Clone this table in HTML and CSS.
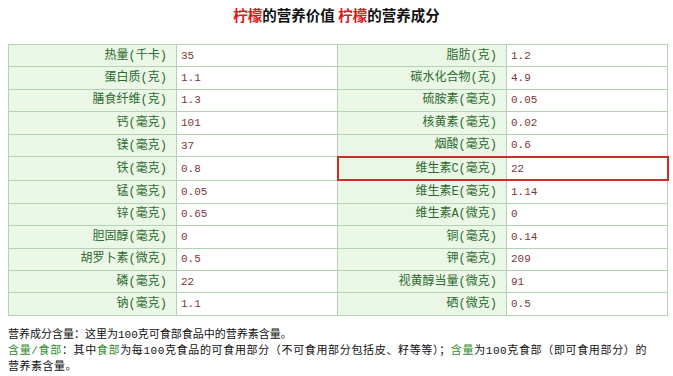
FILE: index.html
```html
<!DOCTYPE html>
<html lang="zh-CN">
<head>
<meta charset="utf-8">
<title>柠檬的营养价值</title>
<link rel="stylesheet" href="styles.css">
</head>
<body>
<div class="page">
  <h1 class="title"><span class="red">柠檬</span>的营养价值 <span class="red">柠檬</span>的营养成分</h1>
  <table class="nut">
    <colgroup>
      <col class="ck1"><col class="cv"><col class="ck2"><col class="cv">
    </colgroup>
    <tbody>
      <tr><td class="k">热量(千卡)</td><td class="v">35</td><td class="k">脂肪(克)</td><td class="v">1.2</td></tr>
      <tr><td class="k">蛋白质(克)</td><td class="v">1.1</td><td class="k">碳水化合物(克)</td><td class="v">4.9</td></tr>
      <tr><td class="k">膳食纤维(克)</td><td class="v">1.3</td><td class="k">硫胺素(毫克)</td><td class="v">0.05</td></tr>
      <tr><td class="k">钙(毫克)</td><td class="v">101</td><td class="k">核黄素(毫克)</td><td class="v">0.02</td></tr>
      <tr><td class="k">镁(毫克)</td><td class="v">37</td><td class="k">烟酸(毫克)</td><td class="v">0.6</td></tr>
      <tr><td class="k">铁(毫克)</td><td class="v">0.8</td><td class="k hl">维生素C(毫克)</td><td class="v hl">22</td></tr>
      <tr><td class="k">锰(毫克)</td><td class="v">0.05</td><td class="k">维生素E(毫克)</td><td class="v">1.14</td></tr>
      <tr><td class="k">锌(毫克)</td><td class="v">0.65</td><td class="k">维生素A(微克)</td><td class="v">0</td></tr>
      <tr><td class="k">胆固醇(毫克)</td><td class="v">0</td><td class="k">铜(毫克)</td><td class="v">0.14</td></tr>
      <tr><td class="k">胡罗卜素(微克)</td><td class="v">0.5</td><td class="k">钾(毫克)</td><td class="v">209</td></tr>
      <tr><td class="k">磷(毫克)</td><td class="v">22</td><td class="k">视黄醇当量(微克)</td><td class="v">91</td></tr>
      <tr><td class="k">钠(毫克)</td><td class="v">1.1</td><td class="k">硒(微克)</td><td class="v">0.5</td></tr>
    </tbody>
  </table>
  <div class="note">
    <p class="line">营养成分含量：这里为100克可食部食品中的营养素含量。</p>
    <p class="para"><span class="g">含量</span><span class="g">/</span><span class="g">食部</span>：其中<span class="g">食部</span>为每100克食品的可食用部分（不可食用部分包括皮、籽等等）；<span class="g">含量</span>为100克食部（即可食用部分）的营养素含量。</p>
  </div>
</div>
</body>
</html>
```

FILE: styles.css
```css
html, body {
  margin: 0;
  padding: 0;
  background: #ffffff;
}
body {
  font-family: "Noto Sans CJK SC", "Liberation Sans", sans-serif;
  color: #000;
}
.page {
  padding: 5px 8px 0 8px;
}
.title {
  margin: 0 0 19px 0;
  font-size: 14.5px;
  line-height: 20px;
  font-weight: bold;
  text-align: center;
  color: #111;
}
.red {
  color: #e0161b;
}
.nut {
  border-collapse: collapse;
  width: 659px;
  table-layout: fixed;
  border: 1px solid #a9cca9;
}
.ck1 { width: 168px; }
.ck2 { width: 169px; }
.cv { width: 161px; }
.nut td {
  border: 1px solid #b2d2b2;
  height: 21.4px;
  padding: 0;
  font-size: 12px;
  line-height: 16px;
  white-space: nowrap;
  overflow: hidden;
}
.nut td.k {
  background: #eaf7e7;
  color: #2c6a2c;
  text-align: right;
  padding-right: 9px;
  font-family: "Liberation Mono", "Noto Sans CJK SC", monospace;
}
.nut td.v {
  background: #ffffff;
  color: #7a3838;
  padding-left: 4px;
  font-family: "Liberation Mono", "DejaVu Sans Mono", monospace;
  font-size: 11px;
}
.nut td.hl {
  border-top: 2px solid #d42a2a;
  border-bottom: 2px solid #d42a2a;
}
.nut td.k.hl {
  border-left: 2px solid #d42a2a;
}
.nut td.v.hl {
  border-right: 2px solid #d42a2a;
}
.note {
  margin-top: 11px;
  width: 639px;
  font-family: "Liberation Mono", "Noto Sans CJK SC", monospace;
  font-size: 11px;
  line-height: 16px;
  color: #111;
}
.note p {
  margin: 0;
}
.note .para {
  text-align: justify;
  letter-spacing: 0.5px;
}
.g {
  color: #2e8b2e;
}
```
